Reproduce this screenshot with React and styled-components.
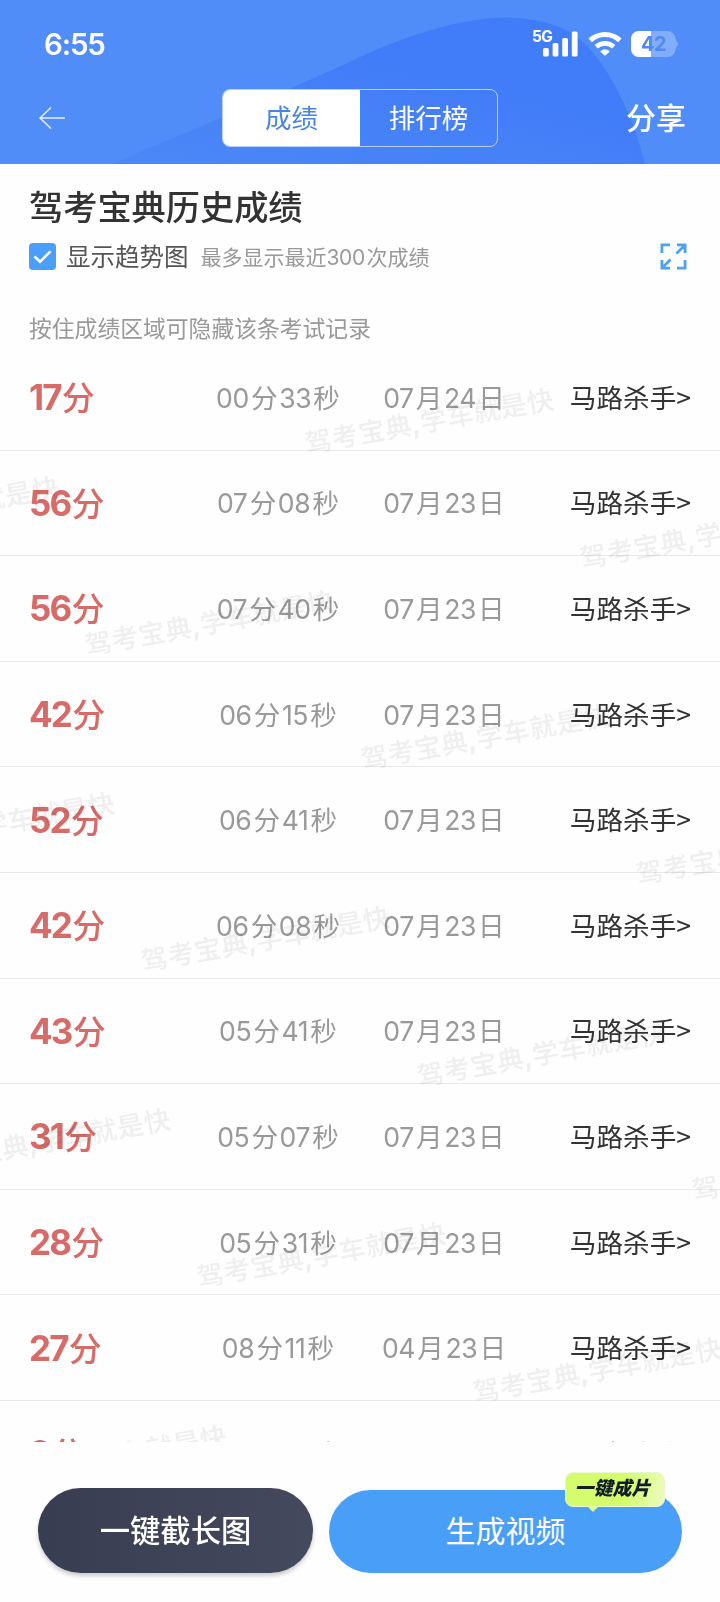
import React from 'react'
import styled, { createGlobalStyle } from 'styled-components'

const records = [
  { score: 17, time: '00分33秒', date: '07月24日' },
  { score: 56, time: '07分08秒', date: '07月23日' },
  { score: 56, time: '07分40秒', date: '07月23日' },
  { score: 42, time: '06分15秒', date: '07月23日' },
  { score: 52, time: '06分41秒', date: '07月23日' },
  { score: 42, time: '06分08秒', date: '07月23日' },
  { score: 43, time: '05分41秒', date: '07月23日' },
  { score: 31, time: '05分07秒', date: '07月23日' },
  { score: 28, time: '05分31秒', date: '07月23日' },
  { score: 27, time: '08分11秒', date: '04月23日' },
  { score: 9, time: '00分15秒', date: '04月23日' },
]

// centre of the first character of every stamp, relative to the list
const stamps = []
for (let i = 0; i < 4; i++) {
  const dx = i * 55.9
  const dy = i * 316.4
  stamps.push([317.8 + dx, 96 + dy])
  stamps.push([593 + dx, 210.5 + dy])
  stamps.push([-177 + dx, 183.5 + dy])
  stamps.push([98 + dx, 297.5 + dy])
}
const visibleStamps = stamps.filter(([x, y]) => x < 720 && y < 1140)

function Mixed({ text }) {
  return text
    .split(/(\d+)/)
    .filter(Boolean)
    .map((part, i) => (/\d/.test(part) ? <Digits key={i}>{part}</Digits> : part))
}

function StatusBar() {
  return (
    <Status>
      <Clock>6:55</Clock>
      <StatusIcons>
        <Network>5G</Network>
        <svg width='36' height='26' viewBox='0 0 36 26' fill='#fff'>
          <rect x='1' y='17' width='5.8' height='8.5' rx='1.6' />
          <rect x='10.6' y='12' width='5.8' height='13.5' rx='1.6' />
          <rect x='20.2' y='7' width='5.8' height='18.5' rx='1.6' />
          <rect x='29.8' y='0.5' width='5.8' height='25' rx='1.6' />
        </svg>
        <Wifi width='34' height='25' viewBox='0 0 34 25' fill='none' stroke='#fff'>
          <path d='M2.2 9.4a21.6 21.6 0 0 1 29.6 0' strokeWidth='5' />
          <path d='M8.2 15.8a13 13 0 0 1 17.6 0' strokeWidth='4.6' />
          <path d='M17 24.4l-4.4-4a6.7 6.7 0 0 1 8.8 0z' fill='#fff' stroke='#fff' strokeWidth='0.8' />
        </Wifi>
        <Battery>
          <svg width='47' height='26' viewBox='0 0 47 26'>
            <path d='M8 0h29a8 8 0 0 1 7.5 7.5l2.5 5.5-2.5 5.5a8 8 0 0 1-7.5 7.5H8a8 8 0 0 1-8-8V8a8 8 0 0 1 8-8z' fill='#82adfb' />
            <path d='M20 0H8a8 8 0 0 0-8 8v10a8 8 0 0 0 8 8h12z' fill='#fff' />
          </svg>
          <BatteryLevel>42</BatteryLevel>
        </Battery>
      </StatusIcons>
    </Status>
  )
}

function App() {
  return (
    <Page>
      <GlobalStyle />
      <Header>
        <Backdrop width='720' height='164' viewBox='0 0 720 164'>
          <defs>
            <linearGradient id='wave' x1='0' y1='1' x2='0.6' y2='0.3'>
              <stop offset='0' stopColor='#4c88f5' />
              <stop offset='1' stopColor='#417cf9' />
            </linearGradient>
          </defs>
          <path d='M112 164C200 126 290 90 360 57C420 30 475 15 518 18C555 21 575 32 590 49C616 80 634 120 645 164Z' fill='url(#wave)' />
        </Backdrop>
        <StatusBar />
        <Nav>
          <BackButton aria-label='返回'>
            <svg width='26' height='22' viewBox='0 0 26 22' fill='none' stroke='#e4eefe' strokeWidth='1.5'>
              <path d='M26 11H1M12 0.5L1 11l11 10.5' />
            </svg>
          </BackButton>
          <Tabs>
            <Tab $active>成绩</Tab>
            <Tab>排行榜</Tab>
          </Tabs>
          <Share>分享</Share>
        </Nav>
      </Header>
      <Intro>
        <Title>驾考宝典历史成绩</Title>
        <Options>
          <Checkbox>
            <svg width='27' height='27' viewBox='0 0 27 27' fill='none' stroke='#fff' strokeWidth='2.6'>
              <path d='M5.5 13.5l5.5 5.3L21.5 8.3' />
            </svg>
          </Checkbox>
          <OptionLabel>显示趋势图</OptionLabel>
          <OptionHint>
            <Mixed text='最多显示最近300次成绩' />
          </OptionHint>
          <svg width='27' height='27' viewBox='0 0 27 27' fill='none' stroke='#4fa3ee' strokeWidth='2.8'>
            <path d='M1.9 10V1.9H10M17 1.9h8.1V10M25 2L16.5 10.5M1.9 17v8.1H10M2 25l8.5-8.5M25.1 17v8.1H17' />
          </svg>
        </Options>
        <Tip>按住成绩区域可隐藏该条考试记录</Tip>
      </Intro>
      <List>
        {records.map((record, i) => (
          <Row key={i}>
            <Score>
              <b>{record.score}</b>分
            </Score>
            <Cell>
              <Mixed text={record.time} />
            </Cell>
            <Cell>
              <Mixed text={record.date} />
            </Cell>
            <Rank>马路杀手&gt;</Rank>
          </Row>
        ))}
        <Watermark>
          {visibleStamps.map(([x, y]) => (
            <Stamp key={`${x}-${y}`} style={{ left: x, top: y }}>
              驾考宝典<i>,</i>学车就是快
            </Stamp>
          ))}
        </Watermark>
      </List>
      <Footer>
        <LongShot>一键截长图</LongShot>
        <MakeVideo>
          生成视频
          <Badge>
            <BadgeText>一键成片</BadgeText>
          </Badge>
        </MakeVideo>
      </Footer>
    </Page>
  )
}

export default App

///// Style //////

const GlobalStyle = createGlobalStyle`
  body {
    margin: 0;
    background: #fefefe;
    font-family: Inter, 'Noto Sans CJK SC', sans-serif;
  }
  * {
    box-sizing: border-box;
  }
  button {
    font-family: inherit;
    border: none;
    background: none;
    padding: 0;
  }
  svg {
    display: block;
    flex-shrink: 0;
  }
`

const Page = styled.div`
  display: flex;
  flex-direction: column;
  width: 720px;
  height: 1602px;
  overflow: hidden;
  white-space: nowrap;
`

const Header = styled.header`
  position: relative;
  height: 164px;
  flex-shrink: 0;
  background: #508df8;
  color: #fff;
`

const Backdrop = styled.svg`
  position: absolute;
  inset: 0;
`

const Status = styled.div`
  position: relative;
  display: flex;
  justify-content: space-between;
  height: 89px;
  padding: 0 42px 0 44px;
`

const Clock = styled.span`
  padding-top: 26px;
  font-size: 29.5px;
  line-height: 36px;
  font-weight: 600;
  letter-spacing: -1.2px;
`

const StatusIcons = styled.div`
  display: flex;
  align-items: flex-start;
  padding-top: 31px;
`

const Network = styled.span`
  width: 20px;
  margin-right: -10px;
  font-size: 15.5px;
  line-height: 12px;
  font-weight: 700;
  letter-spacing: -0.6px;
`

const Wifi = styled.svg`
  margin: 0 9px 0 10px;
`

const Battery = styled.div`
  display: grid;
  & > * {
    grid-area: 1 / 1;
  }
`

const BatteryLevel = styled.span`
  padding-left: 10px;
  font-size: 20px;
  line-height: 26px;
  font-weight: 700;
  letter-spacing: -0.5px;
  color: #5089f3;
`

const Nav = styled.nav`
  position: relative;
  display: flex;
  align-items: center;
  height: 58px;
  padding: 0 34px 0 39px;
`

const BackButton = styled.button`
  width: 183px;
`

const Tabs = styled.div`
  display: flex;
  width: 276px;
  height: 58px;
  border: 1.5px solid #b7d0fc;
  border-radius: 8px;
  overflow: hidden;
`

const Tab = styled.button`
  flex: 1;
  padding-bottom: 4px;
  font-size: 26.5px;
  color: ${(props) => (props.$active ? '#4785de' : '#fff')};
  background: ${(props) => (props.$active ? '#fff' : 'transparent')};
`

const Share = styled.button`
  margin-left: auto;
  padding-bottom: 5px;
  font-size: 30px;
  font-weight: 500;
  color: #fff;
`

const Intro = styled.section`
  height: 181px;
  flex-shrink: 0;
  padding: 19px 33px 0 29px;
`

const Title = styled.h1`
  margin: 0;
  font-size: 34.2px;
  line-height: 50px;
  font-weight: 500;
  color: #333;
`

const Options = styled.div`
  display: flex;
  align-items: center;
  height: 47px;
  & > svg {
    margin-left: auto;
  }
`

const Checkbox = styled.span`
  width: 27px;
  height: 27px;
  border-radius: 4px;
  background: #4aa0f8;
`

const OptionLabel = styled.span`
  margin-left: 10px;
  padding-bottom: 3px;
  font-size: 24.5px;
  color: #555;
`

const OptionHint = styled.span`
  margin-left: 12px;
  padding-bottom: 2px;
  font-size: 21px;
  color: #999;
`

const Tip = styled.p`
  margin: 33px 0 0;
  font-size: 22.8px;
  line-height: 32px;
  color: #999;
`

const List = styled.main`
  position: relative;
  height: 1096.5px;
  flex-shrink: 0;
  overflow: hidden;
`

const Row = styled.div`
  display: grid;
  grid-template-columns: 166px 166px 166px 1fr;
  align-items: center;
  height: 105.6px;
  padding: 0 29px 2px;
  border-bottom: 1.5px solid #e9e9e9;
  font-size: 26.6px;
  color: #999;
`

const Digits = styled.span`
  margin: 0 0.08em 0 0.06em;
  letter-spacing: -0.4px;
  &:first-child {
    margin-left: 0;
  }
`

const Score = styled.span`
  font-size: 33px;
  font-weight: 500;
  color: #d66b68;
  & b {
    margin-right: 1px;
    font-size: 35px;
    font-weight: 700;
    letter-spacing: -1.8px;
  }
`

const Cell = styled.span`
  text-align: center;
`

const Rank = styled.span`
  justify-self: end;
  color: #333;
  font-family: 'Noto Sans CJK SC', sans-serif;
`

const Watermark = styled.div`
  position: absolute;
  inset: 0;
  mix-blend-mode: multiply;
  pointer-events: none;
`

const Stamp = styled.span`
  position: absolute;
  margin: -19px 0 0 -13px;
  font-size: 26.5px;
  line-height: 38px;
  font-weight: 500;
  letter-spacing: 0.6px;
  color: #f0f0f0;
  transform: rotate(-10.3deg);
  transform-origin: 13px 19px;
  & i {
    font-style: normal;
    font-weight: 700;
    margin-left: -1px;
  }
`

const Footer = styled.footer`
  display: flex;
  flex: 1;
  align-items: flex-end;
  gap: 16px;
  padding: 0 38px 29px;
`

const LongShot = styled.button`
  width: 275px;
  height: 85px;
  padding-bottom: 4px;
  border-radius: 43px;
  background: linear-gradient(90deg, #383d52, #45495d);
  box-shadow: 0 3px 4px rgba(0, 0, 0, 0.2);
  font-size: 30.3px;
  font-weight: 500;
  color: #fff;
`

const MakeVideo = styled.button`
  position: relative;
  flex: 1;
  height: 83px;
  padding-bottom: 6px;
  border-radius: 42px;
  background: #499ff8;
  font-size: 30px;
  color: #fff;
`

const Badge = styled.span`
  position: absolute;
  top: -18px;
  right: 17px;
  width: 100px;
  height: 35px;
  border: 1.5px solid #e9f8cf;
  border-radius: 8px;
  background: linear-gradient(100deg, #d4fc6c 60%, #eefbc0);
  &::after {
    content: '';
    position: absolute;
    left: 21px;
    bottom: -6px;
    border: 6px solid transparent;
    border-bottom: none;
    border-top-color: #e2fa9e;
  }
`

const BadgeText = styled.span`
  display: block;
  padding-right: 5px;
  font-size: 19px;
  line-height: 31px;
  font-weight: 900;
  font-style: italic;
  color: #101c26;
`
